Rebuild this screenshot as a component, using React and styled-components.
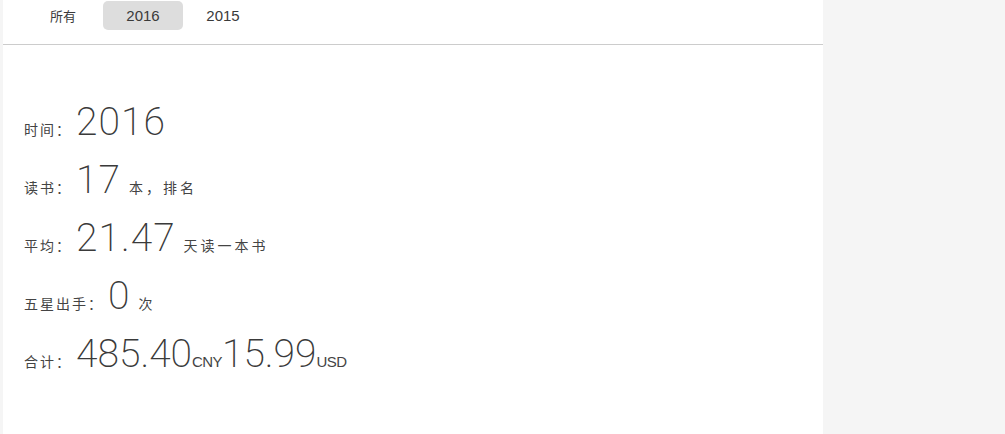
import styled, { createGlobalStyle } from "styled-components";

const GlobalStyle = createGlobalStyle`
    html, body {
        margin: 0;
        padding: 0;
        background: #f5f5f5;
    }
    body {
        font-family: "Liberation Sans", "Noto Sans CJK SC", sans-serif;
        color: #333;
    }
`;

const Page = styled.div`
    display: flex;
    min-height: 434px;
    padding-left: 3px;
`;

const Panel = styled.div`
    width: 820px;
    min-height: 434px;
    background: #fff;
`;

const TabBar = styled.div`
    display: flex;
    height: 45px;
    padding: 1px 0 0 20px;
    box-sizing: border-box;
    border-bottom: 1px solid #cccccc;
`;

const Tab = styled.div`
    width: 80px;
    height: 29px;
    display: flex;
    align-items: center;
    justify-content: center;
    border-radius: 5px;
    background: ${(p) => (p.$active ? "#dddddd" : "transparent")};
    color: #3a3a3a;
    font-size: ${(p) => (p.$cjk ? "13px" : "15px")};
    font-family: "Liberation Sans", "Noto Sans CJK SC", sans-serif;
    cursor: pointer;
`;

const Stats = styled.div`
    display: flex;
    flex-direction: column;
    padding: 54px 0 0 21px;
`;

const Row = styled.div`
    display: flex;
    align-items: baseline;
    height: 58px;
`;

const Label = styled.span`
    font-size: 14px;
    letter-spacing: 2px;
    color: #444;
    font-family: "Noto Sans CJK SC", sans-serif;
`;

const Num = styled.span`
    font-family: Roboto, "Liberation Sans", sans-serif;
    font-weight: 200;
    font-size: 39px;
    letter-spacing: ${(p) => (p.$tight ? "0" : "1px")};
    color: #3a3a3a;
    margin-left: ${(p) => (p.$flush ? "0" : "4px")};
`;

const Unit = styled.span`
    font-size: 14px;
    letter-spacing: 3px;
    color: #444;
    margin-left: 8px;
    font-family: "Noto Sans CJK SC", sans-serif;
`;

const Currency = styled.span`
    font-family: "Liberation Sans", sans-serif;
    font-size: 15px;
    letter-spacing: -0.6px;
    color: #444;
`;

const tabs = ["所有", "2016", "2015"];

const App = () => {
    return (
        <Page>
            <GlobalStyle />
            <Panel>
                <TabBar>
                    {tabs.map((t, i) => (
                        <Tab key={t} $active={t === "2016"} $cjk={i === 0}>
                            {t}
                        </Tab>
                    ))}
                </TabBar>
                <Stats>
                    <Row>
                        <Label>时间：</Label>
                        <Num>2016</Num>
                    </Row>
                    <Row>
                        <Label>读书：</Label>
                        <Num>17</Num>
                        <Unit>本，排名</Unit>
                    </Row>
                    <Row>
                        <Label>平均：</Label>
                        <Num>21.47</Num>
                        <Unit>天读一本书</Unit>
                    </Row>
                    <Row>
                        <Label>五星出手：</Label>
                        <Num>0</Num>
                        <Unit>次</Unit>
                    </Row>
                    <Row>
                        <Label>合计：</Label>
                        <Num $tight>485.40</Num>
                        <Currency>CNY</Currency>
                        <Num $tight $flush>15.99</Num>
                        <Currency>USD</Currency>
                    </Row>
                </Stats>
            </Panel>
        </Page>
    );
};

export default App;
